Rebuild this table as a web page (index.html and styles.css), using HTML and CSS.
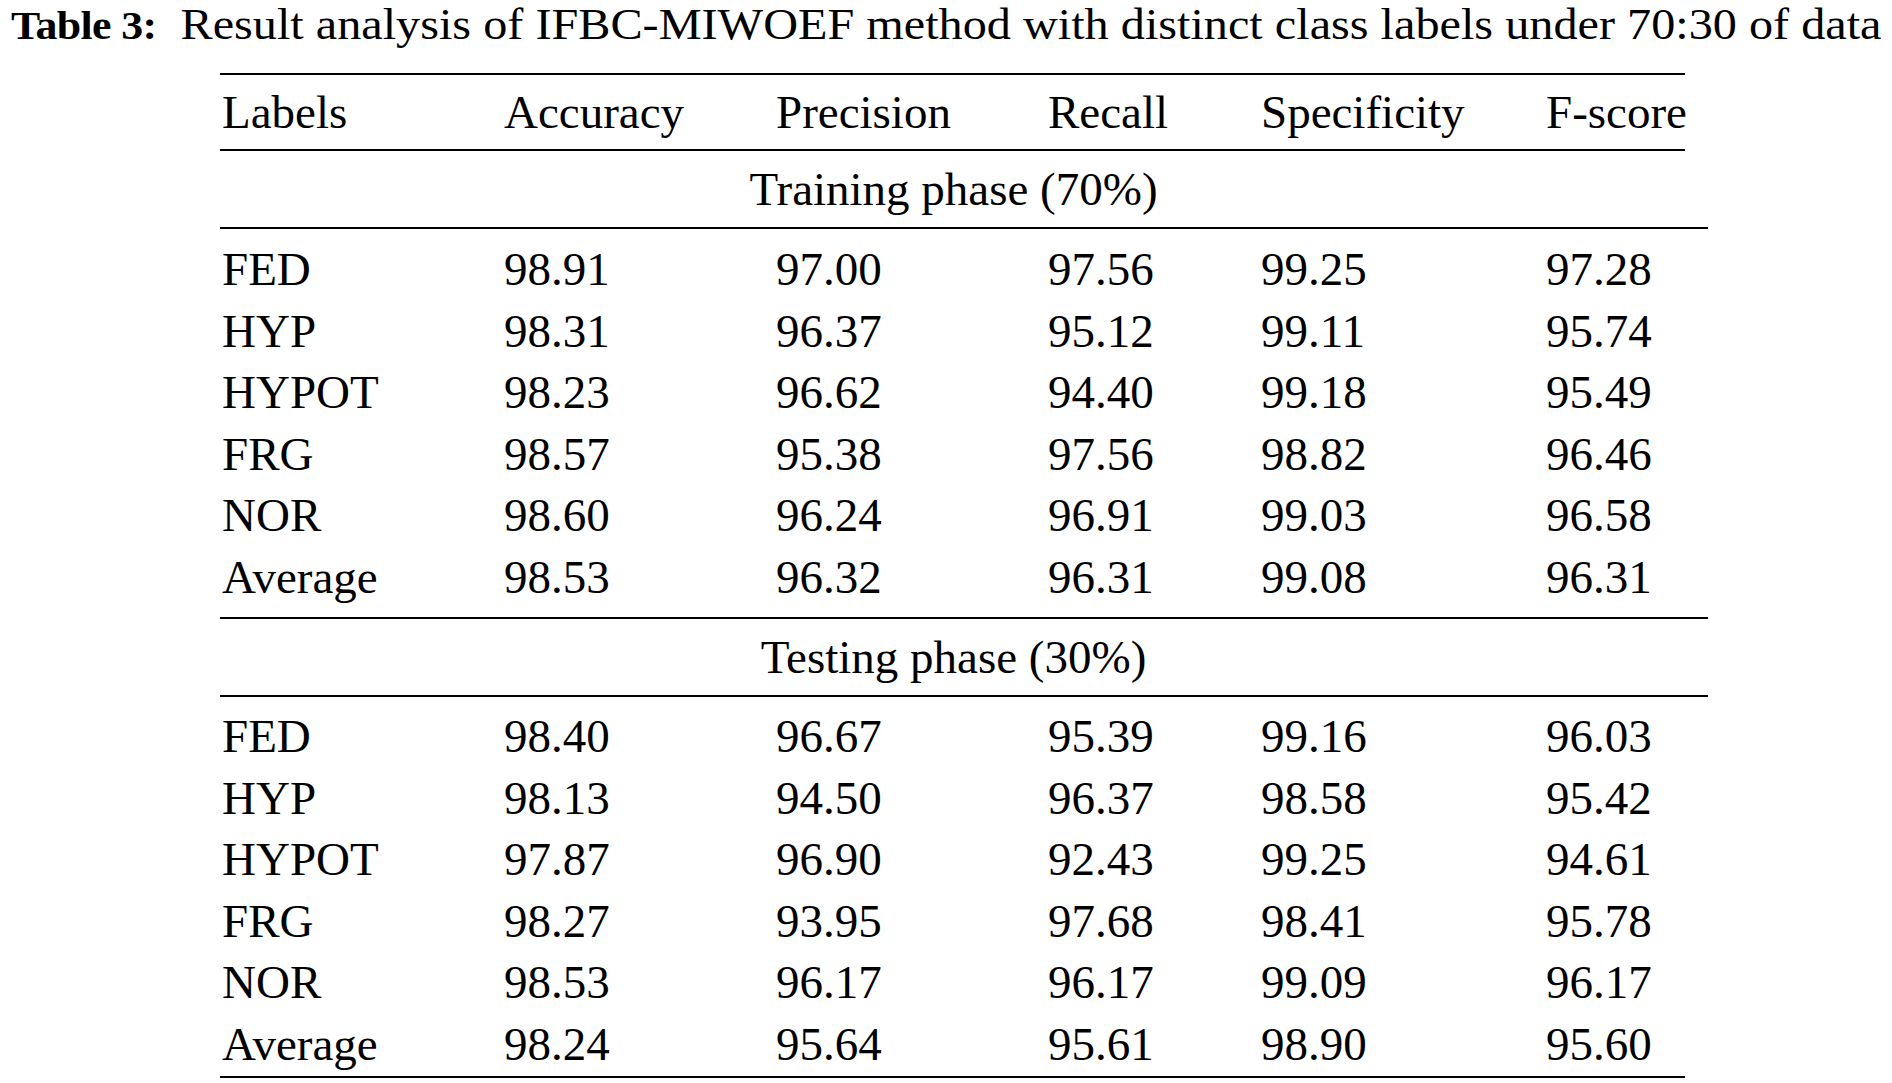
FILE: index.html
```html
<!DOCTYPE html>
<html>
<head>
<meta charset="utf-8">
<link rel="stylesheet" href="styles.css">
</head>
<body>
<div class="page">
  <p class="caption"><b class="cap-label">Table 3:</b>Result analysis of IFBC-MIWOEF method with distinct class labels under 70:30 of data</p>
  <div class="table">
    <div class="row head">
      <span>Labels</span><span>Accuracy</span><span>Precision</span><span>Recall</span><span>Specificity</span><span>F-score</span>
    </div>
    <div class="section">Training phase (70%)</div>
    <div class="group">
      <div class="row"><span>FED</span><span>98.91</span><span>97.00</span><span>97.56</span><span>99.25</span><span>97.28</span></div>
      <div class="row"><span>HYP</span><span>98.31</span><span>96.37</span><span>95.12</span><span>99.11</span><span>95.74</span></div>
      <div class="row"><span>HYPOT</span><span>98.23</span><span>96.62</span><span>94.40</span><span>99.18</span><span>95.49</span></div>
      <div class="row"><span>FRG</span><span>98.57</span><span>95.38</span><span>97.56</span><span>98.82</span><span>96.46</span></div>
      <div class="row"><span>NOR</span><span>98.60</span><span>96.24</span><span>96.91</span><span>99.03</span><span>96.58</span></div>
      <div class="row"><span>Average</span><span>98.53</span><span>96.32</span><span>96.31</span><span>99.08</span><span>96.31</span></div>
    </div>
    <div class="section">Testing phase (30%)</div>
    <div class="group last">
      <div class="row"><span>FED</span><span>98.40</span><span>96.67</span><span>95.39</span><span>99.16</span><span>96.03</span></div>
      <div class="row"><span>HYP</span><span>98.13</span><span>94.50</span><span>96.37</span><span>98.58</span><span>95.42</span></div>
      <div class="row"><span>HYPOT</span><span>97.87</span><span>96.90</span><span>92.43</span><span>99.25</span><span>94.61</span></div>
      <div class="row"><span>FRG</span><span>98.27</span><span>93.95</span><span>97.68</span><span>98.41</span><span>95.78</span></div>
      <div class="row"><span>NOR</span><span>98.53</span><span>96.17</span><span>96.17</span><span>99.09</span><span>96.17</span></div>
      <div class="row"><span>Average</span><span>98.24</span><span>95.64</span><span>95.61</span><span>98.90</span><span>95.60</span></div>
    </div>
  </div>
</div>
</body>
</html>
```
FILE: styles.css
```css
html, body {
  margin: 0;
  padding: 0;
  background: #ffffff;
}

.page {
  font-family: "Liberation Serif", "Times New Roman", serif;
  color: #000000;
  width: 1892px;
  height: 1083px;
  overflow: hidden;
}

.caption {
  margin: 0;
  padding: 0 0 0 10px;
  height: 73px;
  font-size: 44px;
  line-height: 49px;
  white-space: nowrap;
  transform: scaleX(1.096);
  transform-origin: 0 0;
}

.cap-label {
  font-weight: bold;
  font-size: 40px;
  letter-spacing: -0.6px;
  margin-right: 22px;
}

.table {
  margin-left: 220px;
  width: 1488px;
  font-size: 47px;
}

.row {
  display: grid;
  grid-template-columns: 282px 272px 272px 213px 285px 1fr;
  padding-left: 2px;
  height: 61.5px;
  line-height: 61.5px;
  white-space: nowrap;
}

.head {
  width: 1465px;
  box-sizing: border-box;
  height: 78px;
  line-height: 74px;
  border-top: 2px solid #000;
  border-bottom: 2px solid #000;
}

.section {
  width: 1488px;
  box-sizing: border-box;
  text-align: center;
  height: 78px;
  line-height: 76px;
  border-bottom: 2px solid #000;
  padding: 0 23px 0 2px;
}

.group {
  padding: 10px 0 9px 0;
  border-bottom: 2px solid #000;
  width: 1488px;
}

.group.last {
  width: 1465px;
  padding: 9px 0 1px 0;
}
```
